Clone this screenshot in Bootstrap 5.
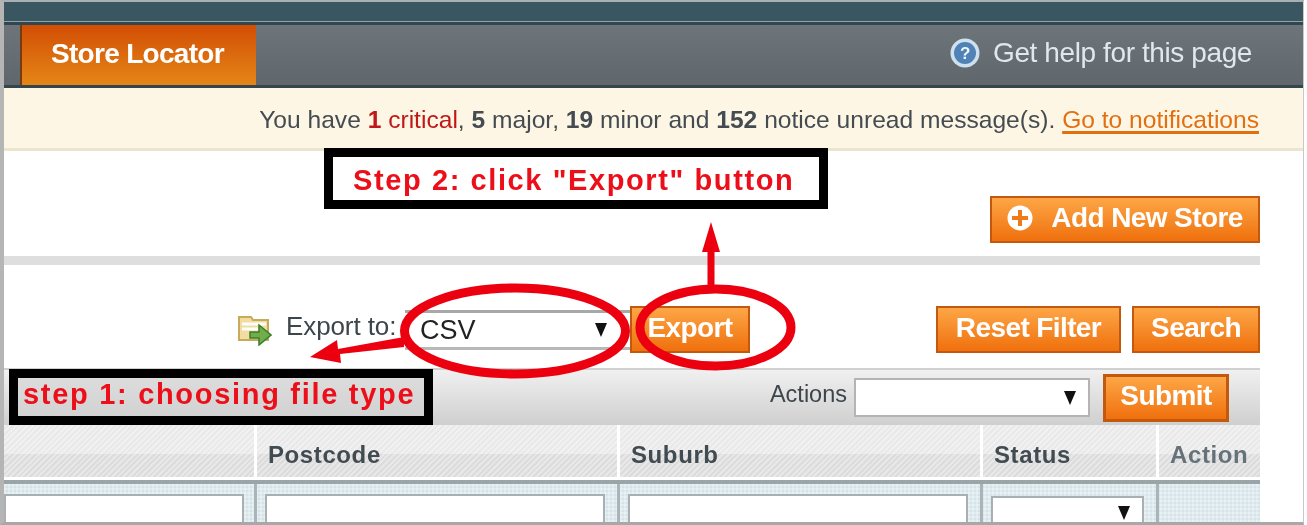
<!DOCTYPE html>
<html lang="en">
<head>
<meta charset="UTF-8">
<title>Store Locator</title>
<link href="https://cdn.jsdelivr.net/npm/bootstrap@5.3.3/dist/css/bootstrap.min.css" rel="stylesheet">
<style>
  html, body { height: 100%; }
  body { background: #fff; overflow: hidden; font-family: "Liberation Sans", Arial, sans-serif; color: #3d464c; }
  .shot { position: relative; width: 1299px; height: 520px; overflow: hidden; border-top: 2px solid #a9b0b3; border-left: 4px solid #b5b5b5; border-bottom: 3px solid #a8a8a8; border-right: 1px solid #c8c8c8; background: #fff; box-sizing: content-box; filter: blur(.4px); }
  .top-strip { height: 20px; background: #3a5761; border-bottom: 1px solid #8fa3a8; }
  .nav-strip { background: linear-gradient(#6d757b, #5f676d); border-top: 3px solid #304750; border-bottom: 3px solid #31474d; box-sizing: content-box; height: 60px; padding-left: 16px; padding-right: 51px; }
  .nav-tab { width: 236px; height: 60px; background: linear-gradient(#d24e05, #e58617); border-left: 2px solid #7a3a10; color: #fff; font-weight: 700; font-size: 28px; letter-spacing: -.7px; padding-left: 29px; padding-bottom: 2px; }
  .help-link { color: #dfe8ee; font-size: 28px; letter-spacing: -.4px; gap: 13px; padding-bottom: 4px; }
  .notice-strip { height: 63px; background: #fdf6e4; border-bottom: 3px solid #ebe5d0; padding-right: 44px; padding-top: 4px; font-size: 24.6px; color: #444c52; }
  .notice-strip b.crit, .notice-strip .crit-txt { color: #c01818; }
  .notice-strip a { color: #e26f12; text-decoration-thickness: 3px; text-underline-offset: 3px; }
  .content-pad { padding-right: 43px; }
  .title-row { height: 105px; padding-bottom: 13px; }
  .rule-bar { height: 9px; background: #dedede; }
  .orange-btn { border: 2px solid #c2590f; border-radius: 0; height: 47px; padding: 0 0 4px; color: #fff; font-weight: 700; font-size: 28px; letter-spacing: -.6px; background: linear-gradient(#fda646, #f0700d); display: flex; align-items: center; justify-content: center; }
  .add-btn { width: 270px; gap: 18px; }
  .export-row { height: 103px; padding-top: 41px; padding-left: 234px; }
  .export-label { font-size: 26px; width: 119px; margin-left: 14px; margin-top: 1px; letter-spacing: -.1px; }
  .csv-select { width: 225px; height: 40px; margin-top: 4px; border-top: 3px solid #a8a8a8; border-bottom: 3px solid #b8b8b8; font-size: 27px; color: #222; padding: 0 23px 0 15px; }
  .arrow-down { width: 0; height: 0; border-left: 6.500px solid transparent; border-right: 6.500px solid transparent; border-top: 14px solid #111; }
  .export-btn { width: 120px; }
  .reset-btn { width: 185px; margin-right: 11px; }
  .search-btn { width: 128px; }
  .tool-strip { height: 57px; background: linear-gradient(#f0f0f0, #cfcfcf); border-top: 2px solid #d0d0d0; padding-right: 31px; }
  .actions-label { font-size: 23.500px; margin-right: 7px; margin-bottom: 5px; }
  .actions-select { width: 236px; height: 39px; background: #fff; border: 2px solid #b4b4b4; padding-right: 12px; margin-right: 13px; }
  .submit-btn { width: 126px; height: 48px; border-width: 3px; }
  .grid-head { height: 59px; border-bottom: 4px solid #9aa5a8; box-shadow: inset 0 -3px 0 #fff; background:
      repeating-linear-gradient(135deg, rgba(255,255,255,.35) 0 2px, transparent 2px 4px),
      linear-gradient(#e9e9e9 0 29px, #dcdcdc 29px); }
  .grid-cell { border-right: 3px solid #fff; font-weight: 700; font-size: 24px; letter-spacing: .6px; padding-left: 11px; padding-top: 5px; color: #414b52; }
  .grid-filter { height: 38px; background:
      repeating-linear-gradient(90deg, rgba(255,255,255,.3) 0 2px, transparent 2px 4px),
      repeating-linear-gradient(0deg, rgba(255,255,255,.3) 0 2px, transparent 2px 4px),
      #d3e3e8; }
  .filter-cell { border-right: 3px solid #a8b4b8; padding: 10px 12px 0 8px; }
  .filter-box { height: 40px; background: #fff; border: 2px solid #a9b0b3; }
  .w-a { width: 253px; } .w-b { width: 363px; } .w-c { width: 363px; } .w-d { width: 176px; } .w-e { width: 101px; border-right: 0; }
  .first-cell { padding-left: 0; padding-right: 10px; }
  .status-box { margin-top: 2px; padding: 8px 12px 0 0; }
  .grey-head { color: #66727a; }
  .step-box { position: absolute; border: 9px solid #000; font-weight: 700; color: #ec0f1a; }
  .step-two { left: 320px; top: 146px; width: 504px; height: 61px; background: #fff; font-size: 29px; letter-spacing: 1.6px; padding-left: 20px; padding-top: 5px; }
  .step-one { left: 5px; top: 367px; width: 424px; height: 56px; background: linear-gradient(#dcdcdc, #d2d2d2); font-size: 29px; letter-spacing: 1.7px; padding-left: 5px; padding-bottom: 4px; }
  .ink-layer { position: absolute; left: -4px; top: -2px; pointer-events: none; }
</style>
</head>
<body>
<div class="shot">
  <div class="top-strip"></div>
  <div class="nav-strip d-flex justify-content-between align-items-center">
    <div class="nav-tab d-flex align-items-center">Store Locator</div>
    <div class="help-link d-flex align-items-center">
      <svg width="30" height="30" viewBox="0 0 30 30"><circle cx="15" cy="15" r="14.500" fill="#cfe0ee"/><circle cx="15" cy="15" r="11" fill="#4f83b8"/><text x="15" y="21" text-anchor="middle" font-family="Liberation Sans" font-weight="700" font-size="17" fill="#eef4f8">?</text></svg>
      <span>Get help for this page</span>
    </div>
  </div>
  <div class="notice-strip d-flex justify-content-end align-items-center">
    <span>You have <b class="crit">1</b> <span class="crit-txt">critical</span>, <b>5</b> major, <b>19</b> minor and <b>152</b> notice unread message(s).&nbsp;<a href="#">Go to notifications</a></span>
  </div>
  <div class="content-pad">
    <div class="title-row d-flex justify-content-end align-items-end">
      <button class="orange-btn add-btn" type="button">
        <svg width="26" height="26" viewBox="0 0 26 26"><circle cx="13" cy="13" r="12.500" fill="#fff"/><path d="M11 5h4v6h6v4h-6v6h-4v-6H5v-4h6z" fill="#ee7a1a"/></svg>
        <span>Add New Store</span>
      </button>
    </div>
    <div class="rule-bar"></div>
    <div class="export-row d-flex align-items-start">
      <svg width="34" height="32" viewBox="0 0 34 32" class="mt-2"><path d="M1 3h12l2 3h15v20H1z" fill="#f1dd9f" stroke="#c9a95a" stroke-width="2"/><path d="M4 10h24M4 15h16" stroke="#fff" stroke-width="3"/><path d="M12 18h9v-7l12 10-12 10v-7h-9z" fill="#6fae4a" stroke="#3d7d2c" stroke-width="1.500"/></svg>
      <span class="export-label">Export to:</span>
      <div class="csv-select d-flex justify-content-between align-items-center"><span>CSV</span><span class="arrow-down"></span></div>
      <button class="orange-btn export-btn" type="button">Export</button>
      <div class="ms-auto d-flex">
        <button class="orange-btn reset-btn" type="button">Reset Filter</button>
        <button class="orange-btn search-btn" type="button">Search</button>
      </div>
    </div>
    <div class="tool-strip d-flex justify-content-end align-items-center">
      <span class="actions-label">Actions</span>
      <div class="actions-select d-flex justify-content-end align-items-center"><span class="arrow-down"></span></div>
      <button class="orange-btn submit-btn" type="button">Submit</button>
    </div>
    <div class="grid-head d-flex">
      <div class="grid-cell w-a"></div>
      <div class="grid-cell w-b d-flex align-items-center">Postcode</div>
      <div class="grid-cell w-c d-flex align-items-center">Suburb</div>
      <div class="grid-cell w-d d-flex align-items-center">Status</div>
      <div class="grid-cell w-e d-flex align-items-center grey-head">Action</div>
    </div>
    <div class="grid-filter d-flex">
      <div class="filter-cell first-cell w-a"><div class="filter-box"></div></div>
      <div class="filter-cell w-b"><div class="filter-box"></div></div>
      <div class="filter-cell w-c"><div class="filter-box"></div></div>
      <div class="filter-cell w-d"><div class="filter-box status-box d-flex justify-content-end"><span class="arrow-down"></span></div></div>
      <div class="filter-cell w-e"></div>
    </div>
  </div>

  <div class="step-box step-two d-flex align-items-center">Step 2: click "Export" button</div>
  <div class="step-box step-one d-flex align-items-center">step 1: choosing file type</div>

  <svg class="ink-layer" width="1307" height="525" viewBox="0 0 1307 525" fill="none">
    <ellipse cx="515" cy="331" rx="110.500" ry="43" stroke="#ec0010" stroke-width="9"/>
    <ellipse cx="715.500" cy="327.500" rx="75.500" ry="38.500" stroke="#ec0010" stroke-width="9"/>
    <path d="M711 222l9 30h-5.500v36h-7v-36H702z" fill="#ec0010"/>
    <path d="M310 357l27-17 1 9 66-12v10l-64 7 1 9z" fill="#ec0010"/>
  </svg>
</div>
</body>
</html>
